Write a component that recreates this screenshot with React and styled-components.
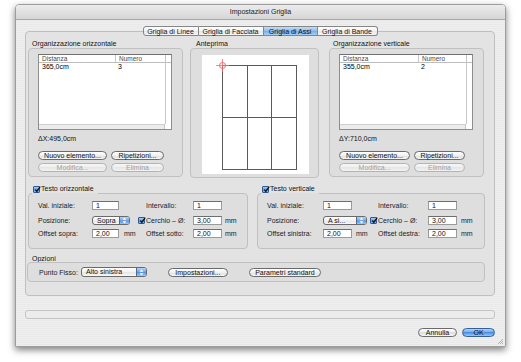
import React from 'react';
import styled, { createGlobalStyle } from 'styled-components';

const GlobalStyle = createGlobalStyle`
  html, body {
    margin: 0;
    padding: 0;
    background: #fff;
  }
  body {
    font-family: "Liberation Sans", Arial, sans-serif;
    font-size: 7px;
    color: #111;
    -webkit-font-smoothing: antialiased;
  }
`;

const Page = styled.div`
  width: 521px;
  height: 362px;
  box-sizing: border-box;
  padding: 4px 0 0 15px;
`;

const Window = styled.div`
  position: relative;
  width: 491px;
  height: 343px;
  box-sizing: border-box;
  border: 1px solid #9d9d9d;
  border-radius: 4px 4px 0 0;
  background: repeating-linear-gradient(#efefef 0 1px, #e9e9e9 1px 2px);
  box-shadow: 0 3px 7px rgba(0, 0, 0, 0.5);
  display: flex;
  flex-direction: column;
`;

const TitleBar = styled.div`
  height: 15px;
  box-sizing: border-box;
  border-bottom: 1px solid #a9a9a9;
  border-radius: 3px 3px 0 0;
  background: linear-gradient(#ececec, #d6d6d6);
  display: flex;
  align-items: center;
  justify-content: center;
  color: #1a1a1a;
  line-height: 14px;
`;

const Body = styled.div`
  flex: 1;
  display: flex;
  flex-direction: column;
  padding: 0 10px 0 9px;
`;

const TabRow = styled.div`
  position: relative;
  z-index: 1;
  display: flex;
  justify-content: center;
  margin: 6px 0 -5px;
`;

const Tab = styled.div`
  width: ${(p) => p.$w}px;
  height: 10px;
  box-sizing: border-box;
  display: flex;
  align-items: center;
  justify-content: center;
  border: 1px solid #858585;
  border-left-width: ${(p) => (p.$first ? 1 : 0)}px;
  border-radius: ${(p) => (p.$first ? '3px 0 0 3px' : p.$last ? '0 3px 3px 0' : '0')};
  background: ${(p) =>
    p.$active
      ? 'linear-gradient(#c3ddf6, #8dbcee 50%, #73aceb 50%, #a8d0f6)'
      : 'linear-gradient(#ffffff, #f2f2f2 50%, #e6e6e6 50%, #f6f6f6)'};
  color: #111;
`;

const Panel = styled.div`
  height: 265px;
  box-sizing: border-box;
  border: 1px solid #bfbfbf;
  border-radius: 4px;
  background: #e3e3e3;
  padding: 8px 9px 0 2px;
  display: flex;
  flex-direction: column;
`;

const TopRow = styled.div`
  display: flex;
  align-items: flex-start;
`;

const Group = styled.div`
  width: ${(p) => p.$w}px;
  margin-left: ${(p) => p.$ml || 0}px;
  display: flex;
  flex-direction: column;
`;

const GroupTitle = styled.div`
  height: 8px;
  line-height: 8px;
  padding-left: ${(p) => p.$indent || 4}px;
  color: #111;
`;

const GroupBox = styled.div`
  height: ${(p) => p.$h}px;
  box-sizing: border-box;
  border: 1px solid #c0c0c0;
  border-radius: 4px;
  background: #dedede;
  padding: ${(p) => p.$pad};
  display: flex;
  flex-direction: column;
`;

const List = styled.div`
  width: 134px;
  height: 76px;
  box-sizing: border-box;
  border: 1px solid #8d8d8d;
  border-top-color: #6f6f6f;
  background: #fff;
  display: grid;
  grid-template-columns: ${(p) => p.$c1}px ${(p) => p.$c2}px 1fr;
  grid-template-rows: 8px 1fr 5px;
`;

const HeadCell = styled.div`
  border-bottom: 1px solid #bdbdbd;
  border-left: ${(p) => (p.$sep ? '1px solid #c6c6c6' : 'none')};
  padding-left: 3px;
  line-height: 7px;
  color: #4a4a4a;
  font-size: 6.5px;
`;

const Rows = styled.div`
  grid-column: span 2;
  display: grid;
  grid-template-columns: ${(p) => p.$c1}px 1fr;
  align-content: start;
`;

const Cell = styled.div`
  padding-left: 3px;
  line-height: 8px;
  color: #000;
`;

const VTrack = styled.div`
  border-left: 1px solid #c6c6c6;
`;

const HTrack = styled.div`
  grid-column: span 2;
  background: #ececec;
  border-top: 1px solid #cfcfcf;
  border-right: 1px solid #c6c6c6;
`;

const Delta = styled.div`
  margin-top: 5px;
  line-height: 8px;
  color: #111;
`;

const ButtonGrid = styled.div`
  margin-top: 8px;
  display: grid;
  grid-template-columns: ${(p) => p.$c1}px ${(p) => p.$c2}px;
  column-gap: ${(p) => p.$gap}px;
  row-gap: 3px;
`;

const Pill = styled.div`
  width: ${(p) => (p.$w ? `${p.$w}px` : 'auto')};
  margin-left: ${(p) => p.$ml || 0}px;
  height: 9px;
  box-sizing: border-box;
  border: 1px solid ${(p) => (p.$disabled ? '#b4b4b4' : '#6a6a6a')};
  border-radius: 5px;
  background: ${(p) =>
    p.$disabled
      ? 'linear-gradient(#f6f6f6, #eeeeee 50%, #e6e6e6 50%, #f2f2f2)'
      : 'linear-gradient(#ffffff, #f0f0f0 50%, #dddddd 50%, #f6f6f6)'};
  color: ${(p) => (p.$disabled ? '#a0a0a0' : '#111')};
  display: flex;
  align-items: center;
  justify-content: center;
  line-height: 7px;
  white-space: nowrap;
`;

const DefaultPill = styled(Pill)`
  border-color: #345f9b;
  background: linear-gradient(#b3d4f7, #6ba5ea 50%, #4b8fe4 50%, #95c8f7);
  color: #111;
`;

const Preview = styled.div`
  width: 107px;
  height: 119px;
  background: #fff;
`;

const TextRow = styled.div`
  display: flex;
  margin-top: 7px;
`;

const TextGroup = styled.fieldset`
  width: ${(p) => p.$w}px;
  margin: 0 0 0 ${(p) => p.$ml || 0}px;
  padding: 0 0 0 9px;
  min-inline-size: 0;
  height: 64px;
  box-sizing: border-box;
  border: 1px solid #c0c0c0;
  border-radius: 4px;
  background: #dedede;
`;

const Legend = styled.legend`
  margin-left: -6px;
  padding: 0 4px 8px 1px;
  display: flex;
  align-items: center;
  gap: 1px;
  line-height: 8px;
  color: #111;
`;

const FieldGrid = styled.div`
  display: grid;
  grid-template-columns: ${(p) => p.$cols};
  grid-template-rows: 15px 13px 9px;
  align-items: start;
`;

const Label = styled.div`
  line-height: 9px;
  padding-left: ${(p) => p.$pl || 0}px;
  color: #1c1c1c;
  white-space: nowrap;
  display: flex;
  align-items: center;
  gap: 1px;
`;

const Input = styled.div`
  height: 9px;
  box-sizing: border-box;
  border: 1px solid #9a9a9a;
  border-top-color: #6e6e6e;
  background: #fff;
  padding-left: 3px;
  line-height: 7px;
  color: #111;
`;

const PopupWrap = styled.div`
  grid-column: span 2;
  display: flex;
`;

const Popup = styled.div`
  width: ${(p) => p.$w}px;
  height: ${(p) => p.$h || 10}px;
  box-sizing: border-box;
  border: 1px solid #6a6a6a;
  border-radius: 3px;
  background: linear-gradient(#ffffff, #f1f1f1 50%, #e4e4e4 50%, #f8f8f8);
  display: flex;
  overflow: hidden;
`;

const PopupText = styled.div`
  flex: 1;
  padding-left: 4px;
  line-height: ${(p) => p.$lh || 8}px;
  color: #111;
`;

const PopupArrows = styled.div`
  width: 9px;
  border-left: 1px solid #50698c;
  background: linear-gradient(#b8d6f6, #6aa4ea 50%, #4b8fe4 50%, #98c9f6);
  display: flex;
  align-items: center;
  justify-content: center;
`;

const Check = styled.div`
  width: 7px;
  height: 7px;
  box-sizing: border-box;
  border: 1px solid #2f5b93;
  border-radius: 1px;
  background: linear-gradient(#a9cff6, #5d9ce8 50%, #3f86e0 50%, #8fc3f4);
  position: relative;
  flex: none;
`;

const Opzioni = styled.div`
  margin-top: 6px;
  display: flex;
  flex-direction: column;
  margin-left: -1px;
`;

const OptBox = styled.div`
  height: 20px;
  box-sizing: border-box;
  margin-top: -1px;
  border: 1px solid #c0c0c0;
  border-radius: 4px;
  background: #dedede;
  display: flex;
  align-items: center;
  padding-left: 11px;
`;

const OptLabel = styled.div`
  margin-right: 3px;
  color: #1c1c1c;
`;

const EmptyField = styled.div`
  margin-top: 14px;
  height: 9px;
  box-sizing: border-box;
  border: 1px solid #c4c4c4;
  border-radius: 3px;
  background: #ececec;
`;

const Footer = styled.div`
  margin-top: 9px;
  display: flex;
  justify-content: flex-end;
  gap: 5px;
`;

const Grip = styled.svg`
  position: absolute;
  right: 2px;
  bottom: 2px;
`;

const CheckMark = () => (
  <svg width="7" height="7" viewBox="0 0 7 7" style={{ position: 'absolute', left: 0, top: -1 }}>
    <path d="M1.3 3.6 L2.8 5.4 L6.2 0.6" fill="none" stroke="#111" strokeWidth="1.3" />
  </svg>
);

const Arrows = () => (
  <svg width="5" height="7" viewBox="0 0 5 7">
    <path d="M2.5 0.5 L4.5 2.8 L0.5 2.8 Z" fill="#fff" />
    <path d="M2.5 6.5 L4.5 4.2 L0.5 4.2 Z" fill="#fff" />
  </svg>
);

const Checkbox = () => (
  <Check>
    <CheckMark />
  </Check>
);

const ListBox = ({ c1, c2, value, count }) => (
  <List $c1={c1} $c2={c2}>
    <HeadCell>Distanza</HeadCell>
    <HeadCell $sep>Numero</HeadCell>
    <HeadCell $sep />
    <Rows $c1={c1}>
      <Cell>{value}</Cell>
      <Cell>{count}</Cell>
    </Rows>
    <VTrack />
    <HTrack />
    <div />
  </List>
);

const Organizzazione = ({ title, ml, c1, c2, value, count, delta, b1, b2 }) => (
  <Group $w={155} $ml={ml}>
    <GroupTitle>{title}</GroupTitle>
    <GroupBox $h={129} $pad="5px 10px 0 9px">
      <ListBox c1={c1} c2={c2} value={value} count={count} />
      <Delta>{delta}</Delta>
      <ButtonGrid $c1={b1} $c2={b2} $gap={4}>
        <Pill>Nuovo elemento...</Pill>
        <Pill>Ripetizioni...</Pill>
        <Pill $disabled>Modifica...</Pill>
        <Pill $disabled>Elimina</Pill>
      </ButtonGrid>
    </GroupBox>
  </Group>
);

const GridPreview = () => (
  <svg width="107" height="119" viewBox="0 0 107 119">
    <g stroke="#5a5a5a" strokeWidth="1" fill="none" shapeRendering="crispEdges">
      <rect x="20.5" y="10.5" width="74" height="104" />
      <line x1="45.5" y1="10.5" x2="45.5" y2="114.5" />
      <line x1="69.5" y1="10.5" x2="69.5" y2="114.5" />
      <line x1="20.5" y1="62.5" x2="94.5" y2="62.5" />
    </g>
    <g stroke="#f26b6b" fill="none">
      <circle cx="20.5" cy="10.5" r="3" strokeWidth="1" />
      <line x1="14" y1="10.5" x2="27" y2="10.5" strokeWidth="0.8" />
      <line x1="20.5" y1="4" x2="20.5" y2="17" strokeWidth="0.8" />
    </g>
  </svg>
);

const TestoGroup = ({ title, w, ml, cols, popupW, popupText, offsetA, offsetB, mmPad, mmPadEnd }) => (
  <TextGroup $w={w} $ml={ml}>
    <Legend>
      <Checkbox />
      {title}
    </Legend>
    <FieldGrid $cols={cols}>
      <Label>Val. iniziale:</Label>
      <Input>1</Input>
      <div />
      <Label $pl={8}>Intervallo:</Label>
      <Input>1</Input>
      <div />

      <Label>Posizione:</Label>
      <PopupWrap>
        <Popup $w={popupW} $h={9}>
          <PopupText $lh={7}>{popupText}</PopupText>
          <PopupArrows>
            <Arrows />
          </PopupArrows>
        </Popup>
      </PopupWrap>
      <Label>
        <Checkbox />
        Cerchio – Ø:
      </Label>
      <Input>3,00</Input>
      <Label $pl={mmPadEnd}>mm</Label>

      <Label>{offsetA}</Label>
      <Input>2,00</Input>
      <Label $pl={mmPad}>mm</Label>
      <Label $pl={8}>{offsetB}</Label>
      <Input>2,00</Input>
      <Label $pl={mmPadEnd}>mm</Label>
    </FieldGrid>
  </TextGroup>
);

const tabs = [
  { label: 'Griglia di Linee', w: 56 },
  { label: 'Griglia di Facciata', w: 65 },
  { label: 'Griglia di Assi', w: 54, active: true },
  { label: 'Griglia di Bande', w: 60 },
];

const App = () => (
  <>
    <GlobalStyle />
    <Page>
      <Window>
        <TitleBar>Impostazioni Griglia</TitleBar>
        <Body>
          <TabRow>
            {tabs.map((t, i) => (
              <Tab key={t.label} $w={t.w} $active={t.active} $first={i === 0} $last={i === tabs.length - 1}>
                {t.label}
              </Tab>
            ))}
          </TabRow>
          <Panel>
            <TopRow>
              <Organizzazione
                title="Organizzazione orizzontale"
                c1={76}
                c2={50}
                value="365,0cm"
                count="3"
                delta="ΔX:495,0cm"
                b1={69}
                b2={53}
              />
              <Group $w={129} $ml={7}>
                <GroupTitle $indent={6}>Anteprima</GroupTitle>
                <GroupBox $h={130} $pad="6px 9px 0 11px">
                  <Preview>
                    <GridPreview />
                  </Preview>
                </GroupBox>
              </Group>
              <Organizzazione
                title="Organizzazione verticale"
                ml={10}
                c1={78}
                c2={48}
                value="355,0cm"
                count="2"
                delta="ΔY:710,0cm"
                b1={71}
                b2={51}
              />
            </TopRow>
            <TextRow>
              <TestoGroup
                title="Testo orizzontale"
                w={220}
                cols="54px 27px 19px 55px 29px auto"
                popupW={38}
                popupText="Sopra"
                offsetA="Offset sopra:"
                offsetB="Offset sotto:"
                mmPad={5}
                mmPadEnd={3}
              />
              <TestoGroup
                title="Testo verticale"
                w={228}
                ml={9}
                cols="56px 29px 18px 58px 29px auto"
                popupW={44}
                popupText="A si..."
                offsetA="Offset sinistra:"
                offsetB="Offset destra:"
                mmPad={4}
                mmPadEnd={4}
              />
            </TextRow>
            <Opzioni>
              <GroupTitle $indent={5}>Opzioni</GroupTitle>
              <OptBox>
                <OptLabel>Punto Fisso:</OptLabel>
                <Popup $w={66}>
                  <PopupText>Alto sinistra</PopupText>
                  <PopupArrows>
                    <Arrows />
                  </PopupArrows>
                </Popup>
                <Pill $w={60} $ml={21}>
                  Impostazioni...
                </Pill>
                <Pill $w={72} $ml={21}>
                  Parametri standard
                </Pill>
              </OptBox>
            </Opzioni>
          </Panel>
          <EmptyField />
          <Footer>
            <Pill $w={39}>Annulla</Pill>
            <DefaultPill $w={33}>OK</DefaultPill>
          </Footer>
        </Body>
        <Grip width="6" height="6" viewBox="0 0 6 6">
          <g stroke="#9a9a9a" strokeWidth="0.7">
            <line x1="1" y1="6" x2="6" y2="1" />
            <line x1="3" y1="6" x2="6" y2="3" />
            <line x1="5" y1="6" x2="6" y2="5" />
          </g>
        </Grip>
      </Window>
    </Page>
  </>
);

export default App;
